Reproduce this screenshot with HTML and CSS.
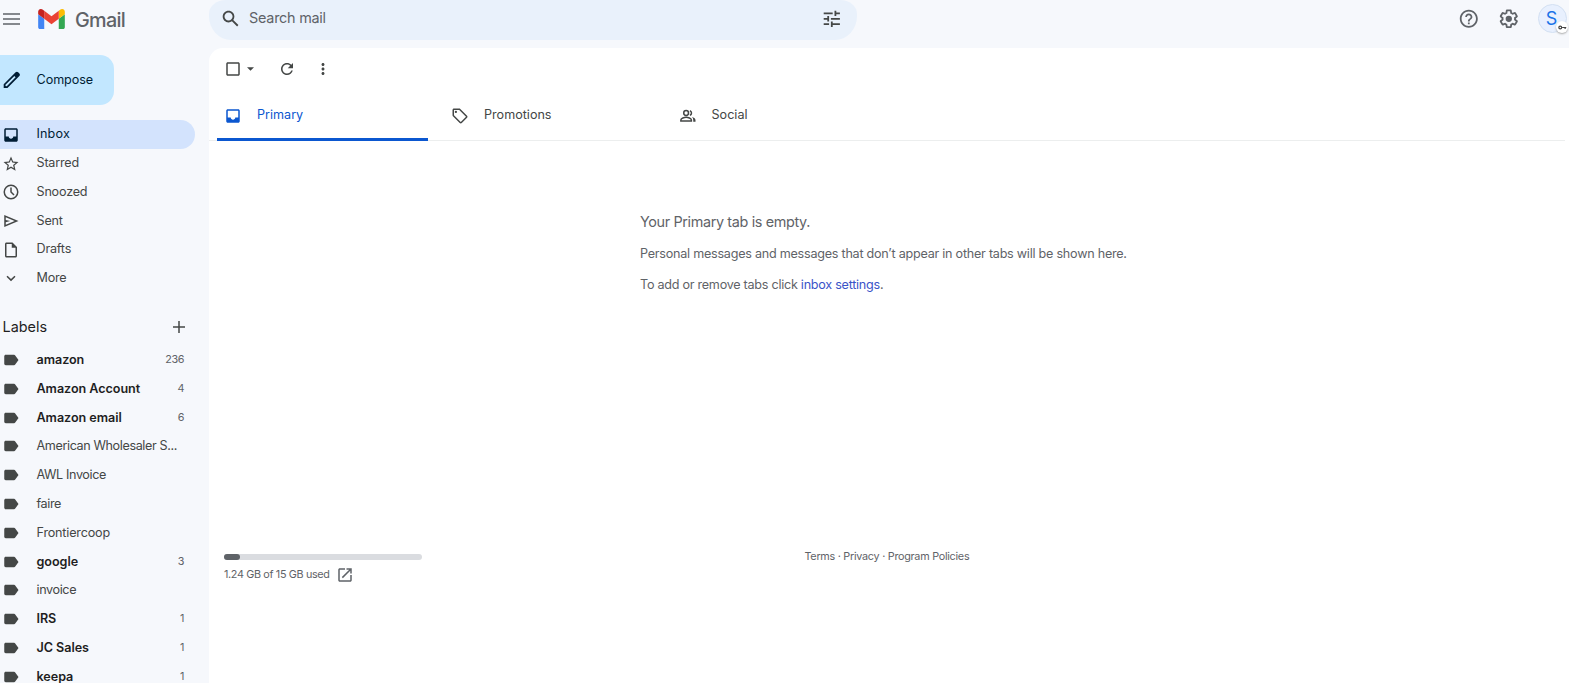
FILE: index.html
```
<!DOCTYPE html>
<html lang="en">
<head>
<meta charset="utf-8">
<title>Gmail</title>
<link rel="stylesheet" href="styles.css">
</head>
<body>
<svg class="defs" aria-hidden="true">
  <symbol id="label" viewBox="0 0 24 24"><path d="M17.630 5.840C17.270 5.330 16.670 5 16 5L5 5.010C3.900 5.010 3 5.900 3 7v10c0 1.100.900 1.990 2 1.990L16 19c.670 0 1.270-.330 1.630-.840L22 12l-4.370-6.160z"/></symbol>
  <symbol id="inbox" viewBox="0 0 24 24"><path d="M19 3H5c-1.100 0-2 .900-2 2v14c0 1.100.890 2 2 2h14c1.100 0 2-.900 2-2V5c0-1.100-.900-2-2-2zm0 11h-4c0 1.660-1.350 3-3 3s-3-1.340-3-3H5V5h14v9z"/></symbol>
</svg>
<header class="top">
  <div class="brand">
    <svg class="menu" viewBox="0 0 18 14"><path d="M0 2h17M0 7h17M0 12h17" stroke="#5f6368" stroke-width="1.7"/></svg>
    <svg class="logo" viewBox="52 42 88 66"><path fill="#4285f4" d="M58 108h14V74L52 59v43c0 3.320 2.690 6 6 6"/><path fill="#34a853" d="M120 108h14c3.320 0 6-2.690 6-6V59l-20 15"/><path fill="#fbbc04" d="M120 48v26l20-15v-8c0-7.420-8.470-11.650-14.400-7.200"/><path fill="#ea4335" d="M72 74V48l24 18 24-18v26L96 92"/><path fill="#c5221f" d="M52 51v8l20 15V48l-5.600-4.200c-5.940-4.450-14.400-.220-14.400 7.200"/></svg>
    <span class="wordmark">Gmail</span>
  </div>
  <div class="search">
    <svg class="i22" viewBox="0 0 24 24"><path d="M20.490 19l-5.730-5.730C15.530 12.200 16 10.910 16 9.500 16 5.910 13.090 3 9.500 3S3 5.910 3 9.500 5.910 16 9.500 16c1.410 0 2.700-.470 3.770-1.240L19 20.490 20.490 19zM5 9.500C5 7.010 7.010 5 9.500 5S14 7.010 14 9.500 11.990 14 9.500 14 5 11.990 5 9.500z"/></svg>
    <span class="search-text">Search mail</span>
    <svg class="i22 tune" viewBox="0 0 24 24"><path d="M3 17v2h6v-2H3zM3 5v2h10V5H3zm10 16v-2h8v-2h-8v-2h-2v6h2zM7 9v2H3v2h4v2h2V9H7zm14 4v-2H11v2h10zm-6-4h2V7h4V5h-4V3h-2v6z"/></svg>
  </div>
  <div class="tools">
    <svg class="i22" viewBox="0 0 24 24"><path d="M11 18h2v-2h-2v2zm1-16C6.480 2 2 6.480 2 12s4.480 10 10 10 10-4.480 10-10S17.520 2 12 2zm0 18c-4.410 0-8-3.590-8-8s3.590-8 8-8 8 3.590 8 8-3.590 8-8 8zm0-14c-2.210 0-4 1.790-4 4h2c0-1.100.900-2 2-2s2 .900 2 2c0 2-3 1.750-3 5h2c0-2.250 3-2.500 3-5 0-2.210-1.790-4-4-4z"/></svg>
    <svg class="i22" viewBox="0 0 24 24"><path d="M13.850 22.250h-3.700c-.740 0-1.360-.540-1.450-1.270l-.270-1.890c-.270-.140-.530-.290-.790-.460l-1.800.720c-.700.260-1.470-.030-1.810-.650L2.200 15.530c-.350-.660-.200-1.440.360-1.880l1.530-1.190c-.010-.150-.020-.300-.020-.460 0-.150.010-.310.020-.460l-1.520-1.190c-.590-.450-.740-1.260-.370-1.880l1.850-3.190c.340-.620 1.110-.900 1.790-.630l1.810.730c.260-.170.520-.320.780-.460l.270-1.910c.090-.700.710-1.250 1.440-1.250h3.700c.740 0 1.360.540 1.450 1.270l.270 1.890c.270.140.530.290.790.460l1.800-.720c.710-.260 1.480.030 1.820.650l1.840 3.180c.360.660.200 1.440-.360 1.880l-1.520 1.190c.010.150.020.300.020.460s-.010.310-.020.460l1.520 1.190c.560.450.720 1.230.370 1.860l-1.860 3.220c-.340.620-1.110.900-1.800.630l-1.800-.720c-.260.170-.520.320-.780.460l-.270 1.910c-.100.680-.720 1.220-1.460 1.220zm-3.230-2h2.760l.370-2.550.530-.220c.440-.180.880-.440 1.340-.780l.450-.340 2.380.960 1.380-2.400-2.030-1.580.070-.560c.030-.260.060-.510.060-.780s-.030-.530-.060-.780l-.070-.560 2.030-1.580-1.390-2.400-2.390.960-.450-.350c-.420-.320-.870-.580-1.330-.770l-.520-.220-.370-2.550h-2.760l-.370 2.550-.530.210c-.440.190-.880.440-1.340.790l-.450.330-2.380-.950-1.390 2.390 2.030 1.580-.070.560a7 7 0 0 0-.060.790c0 .260.020.530.060.780l.070.560-2.030 1.580 1.380 2.400 2.390-.960.450.350c.430.330.860.580 1.330.770l.530.220.380 2.550z"/><circle cx="12" cy="12" r="3.500"/></svg>
    <div class="avatar">S<span class="key"><svg viewBox="0 0 12 6"><path d="M5.500 3H11M9.500 3v2" fill="none" stroke="#444" stroke-width="1.600"/><circle cx="3" cy="3" r="1.900" fill="none" stroke="#444" stroke-width="1.600"/></svg></span></div>
  </div>
</header>
<div class="body">
  <nav class="side">
    <div class="compose"><svg class="i22" viewBox="0 0 24 24"><path d="M20.410 4.940l-1.350-1.350c-.780-.780-2.050-.780-2.830 0L3 16.820V21h4.180L20.410 7.770c.790-.780.790-2.050 0-2.830zm-14 14.120L5 19v-1.360l9.820-9.820 1.410 1.410-9.820 9.830z"/></svg><span>Compose</span></div>
    <div class="row active"><svg class="i18"><use href="#inbox"/></svg><span>Inbox</span></div>
    <div class="row nav"><svg class="i18" viewBox="0 0 24 24"><path d="M22 9.240l-7.190-.620L12 2 9.190 8.630 2 9.240l5.460 4.730L5.820 21 12 17.270 18.180 21l-1.630-7.030L22 9.240zM12 15.400l-3.760 2.270 1-4.280-3.320-2.880 4.380-.380L12 6.100l1.710 4.040 4.380.380-3.320 2.880 1 4.280L12 15.400z"/></svg><span>Starred</span></div>
    <div class="row nav"><svg class="i18" viewBox="0 0 24 24"><circle cx="12" cy="12" r="9" fill="none" stroke="#444746" stroke-width="2"/><path d="M12 6v6l4 4" fill="none" stroke="#444746" stroke-width="2"/></svg><span>Snoozed</span></div>
    <div class="row nav"><svg class="i18" viewBox="0 0 24 24"><path d="M3 4v16l19-8L3 4zm2 3l11.850 5L5 17v-3.500l6-1.500-6-1.500V7z"/></svg><span>Sent</span></div>
    <div class="row nav"><svg class="i18" viewBox="0 0 24 24"><path d="M14 2H6c-1.100 0-2 .900-2 2v16c0 1.100.900 2 2 2h12c1.100 0 2-.900 2-2V8l-6-6zM6 20V4h7v5h5v11H6z"/></svg><span>Drafts</span></div>
    <div class="row nav"><svg class="i18" viewBox="0 0 24 24"><path d="M7.400 7.500L12 12.100l4.600-4.600L18 8.900l-6 6-6-6z"/></svg><span>More</span></div>
    <div class="labels-head"><span>Labels</span><svg class="i18" viewBox="0 0 24 24"><path d="M20 13h-7v7h-2v-7H4v-2h7V4h2v7h7v2z"/></svg></div>
    <div class="row label bold"><svg class="i18"><use href="#label"/></svg><span>amazon</span><em>236</em></div>
    <div class="row label bold"><svg class="i18"><use href="#label"/></svg><span>Amazon Account</span><em>4</em></div>
    <div class="row label bold"><svg class="i18"><use href="#label"/></svg><span>Amazon email</span><em>6</em></div>
    <div class="row label"><svg class="i18"><use href="#label"/></svg><span>American Wholesaler S...</span></div>
    <div class="row label"><svg class="i18"><use href="#label"/></svg><span>AWL Invoice</span></div>
    <div class="row label"><svg class="i18"><use href="#label"/></svg><span>faire</span></div>
    <div class="row label"><svg class="i18"><use href="#label"/></svg><span class="wide">Frontiercoop</span></div>
    <div class="row label bold"><svg class="i18"><use href="#label"/></svg><span>google</span><em>3</em></div>
    <div class="row label"><svg class="i18"><use href="#label"/></svg><span>invoice</span></div>
    <div class="row label bold"><svg class="i18"><use href="#label"/></svg><span>IRS</span><em>1</em></div>
    <div class="row label bold"><svg class="i18"><use href="#label"/></svg><span>JC Sales</span><em>1</em></div>
    <div class="row label bold"><svg class="i18"><use href="#label"/></svg><span>keepa</span><em>1</em></div>
  </nav>
  <main class="panel">
    <div class="toolbar">
      <svg class="i18" viewBox="0 0 24 24"><path d="M19 5v14H5V5h14m0-2H5c-1.100 0-2 .900-2 2v14c0 1.100.900 2 2 2h14c1.100 0 2-.900 2-2V5c0-1.100-.900-2-2-2z"/></svg>
      <svg class="caret" viewBox="0 0 8 4"><path d="M0 0h8L4 4z"/></svg>
      <svg class="refresh i18" viewBox="0 0 24 24"><path d="M17.650 6.350C16.200 4.900 14.210 4 12 4c-4.420 0-7.990 3.580-7.990 8s3.570 8 7.990 8c3.730 0 6.840-2.550 7.730-6h-2.080c-.820 2.330-3.040 4-5.650 4-3.310 0-6-2.690-6-6s2.690-6 6-6c1.660 0 3.140.690 4.220 1.780L13 11h7V4l-2.350 2.350z"/></svg>
      <svg class="dots i18" viewBox="0 0 24 24"><path d="M12 8c1.100 0 2-.900 2-2s-.900-2-2-2-2 .900-2 2 .900 2 2 2zm0 2c-1.100 0-2 .900-2 2s.900 2 2 2 2-.900 2-2-.900-2-2-2zm0 6c-1.100 0-2 .900-2 2s.900 2 2 2 2-.900 2-2-.900-2-2-2z"/></svg>
    </div>
    <div class="tabs">
      <div class="tab on"><svg class="i18"><use href="#inbox"/></svg><span>Primary</span></div>
      <div class="tab"><svg class="i18" viewBox="0 0 24 24"><path d="M21.410 11.580l-9-9C12.050 2.220 11.550 2 11 2H4c-1.100 0-2 .900-2 2v7c0 .550.220 1.050.590 1.420l9 9c.360.360.860.580 1.410.580s1.050-.220 1.410-.590l7-7c.370-.360.590-.860.590-1.410s-.230-1.060-.590-1.420zM13 20.010L4 11V4h7v-.010l9 9-7 7.020z"/><circle cx="6.500" cy="6.500" r="1.500"/></svg><span>Promotions</span></div>
      <div class="tab"><svg class="i18" viewBox="0 0 24 24"><g fill="none" stroke="#444746" stroke-width="2"><circle cx="9.500" cy="8" r="3.200"/><path d="M2.500 18.500v-1.300c0-2 4.600-3.400 7-3.400s7 1.400 7 3.400v1.300zM14.500 4.900a3.300 3.300 0 0 1 0 6.200"/></g><path d="M17.300 13.300c2.300.5 4.700 1.900 4.700 3.900v2.300h-3v-2.300c0-1.600-.6-2.900-1.700-3.900z"/></svg><span>Social</span></div>
    </div>
    <div class="empty">
      <p class="lead">Your Primary tab is empty.</p>
      <p class="info">Personal messages and messages that don’t appear in other tabs will be shown here.</p>
      <p class="hint">To add or remove tabs click <a>inbox settings</a>.</p>
    </div>
    <footer class="foot">
      <div class="storage">
        <div class="bar"><div class="used"></div></div>
        <div class="quota"><span>1.24 GB of 15 GB used</span><svg class="i18" viewBox="0 0 24 24"><path d="M19 19H5V5h7V3H5c-1.110 0-2 .900-2 2v14c0 1.100.890 2 2 2h14c1.100 0 2-.900 2-2v-7h-2v7zM14 3v2h3.590l-9.830 9.830 1.410 1.410L19 6.410V10h2V3h-7z"/></svg></div>
      </div>
      <div class="legal">Terms · Privacy · Program Policies</div>
    </footer>
  </main>
</div>
</body>
</html>
```
FILE: styles.css
```
* { box-sizing: border-box; }
body { margin: 0; width: 1569px; height: 683px; overflow: hidden; background: #f6f8fc; color: #444746; font: 12.6px/18px Inter, "Liberation Sans", sans-serif; }
svg { display: block; flex: none; fill: #444746; }
span { white-space: nowrap; }
p { margin: 0; }
.defs { position: absolute; width: 0; height: 0; }
.i18 { width: 18px; height: 18px; }
.i22 { width: 21.6px; height: 21.6px; }
.top { display: flex; height: 48px; }
.brand { width: 209px; display: flex; align-items: flex-start; padding-left: 3px; }
.menu { width: 18px; height: 14px; margin-top: 12px; }
.logo { width: 27px; height: 20px; margin: 9px 0 0 17px; }
.wordmark { margin: 7px 0 0 10px; font: 500 19.8px/26px Inter, sans-serif; letter-spacing: -.7px; color: #5f6368; }
.search { width: 648px; height: 40px; padding: 0 14px 3px 11px; display: flex; align-items: center; background: #e9f1fb; border-radius: 17px 17px 22px 22px / 14px 14px 24px 24px; }
.search-text { flex: 1; margin: -1px 0 0 7.500px; font-size: 14.4px; letter-spacing: -.25px; color: #5f6368; }
.tools { margin-left: auto; display: flex; align-items: flex-start; padding-right: 2px; }
.tools > svg { margin: 8px 18.400px 0 0; fill: #5f6368; }
.avatar { position: relative; width: 29px; height: 29px; margin-top: 4px; border: 1px solid #d3e0f2; border-radius: 50%; background: #e8f0fe; color: #1a73e8; font-size: 18px; line-height: 27px; text-align: center; padding-right: 2px; }
.key { position: absolute; right: -2px; bottom: -1px; width: 12px; height: 12px; border-radius: 50%; background: #fff; box-shadow: 0 1px 2px #aaa; }
.key svg { width: 9px; height: 5px; margin: 4px 0 0 2px; }
.body { display: flex; height: 635px; }
.side { width: 209px; padding-top: 7px; }
.compose { width: 114px; height: 50px; margin-bottom: 15px; display: flex; align-items: center; gap: 14px; border-radius: 0 14px 14px 0; background: #c2e7ff; color: #001d35; letter-spacing: -.1px; }
.compose svg { margin-left: 1px; fill: #001d35; }
.row { width: 195px; height: 28.8px; padding: 0 11px 1px 2px; display: flex; align-items: center; }
.row span { margin-left: 16.500px; }
.row svg { margin-top: 2px; }
.row em { margin-left: auto; font-style: normal; font-size: 10.8px; letter-spacing: -.4px; color: #5f6368; }
.active { background: #d3e3fd; border-radius: 0 15px 15px 0; color: #001d35; }
.active span { letter-spacing: .15px; }
.active svg { fill: #001d35; }
.nav { padding-bottom: .2px; letter-spacing: -.2px; }
.nav svg { margin-top: 1px; }
.label { padding-bottom: 0; letter-spacing: -.38px; }
.label svg { margin-top: 0; }
.label .wide { letter-spacing: -.18px; }
.bold span { font-weight: 600; letter-spacing: -.05px; color: #1f1f1f; }
.labels-head { width: 195px; height: 52.800px; display: flex; align-items: center; justify-content: space-between; padding: 16px 7px .8px 2.500px; font-size: 14.4px; color: #1f1f1f; }
.panel { flex: 1; display: flex; flex-direction: column; background: #fff; border-radius: 14px 0 0 0; }
.toolbar { display: flex; align-items: center; height: 43px; padding: 0 0 1px 15px; }
.caret { width: 7px; height: 4px; margin-left: 5px; }
.refresh { margin-left: 24px; }
.dots { margin-left: 18px; }
.tabs { display: flex; height: 50px; margin-right: 4px; padding-left: 8px; border-bottom: 1px solid #eceeee; }
.tab { width: 227.500px; height: 50px; padding: 0 0 2px 7px; display: flex; align-items: center; gap: 15px; color: #444746; }
.tab svg { margin-top: 2px; }
.on { width: 211px; margin-right: 16px; border-bottom: 3px solid #0b57d0; border-radius: 3px 3px 0 0; padding-bottom: 0; color: #0b57d0; }
.on svg { fill: #0b57d0; }
.empty { height: 408px; padding: 72px 0 0 431px; color: #5f6368; }
.lead { font-size: 14.400px; letter-spacing: -.36px; margin-bottom: 14px; }
.info { letter-spacing: -.245px; margin-bottom: 13px; }
.hint { letter-spacing: -.26px; }
.empty a { color: #3b54c8; }
.foot { display: flex; padding-left: 15px; font-size: 10.800px; color: #5f6368; }
.storage { width: 198px; padding-top: 5px; }
.bar { height: 6px; border-radius: 3px; background: #dadce0; }
.used { width: 16px; height: 6px; border-radius: 3px; background: #5f6368; }
.quota { display: flex; align-items: center; gap: 6.500px; margin-top: 5.500px; letter-spacing: -.34px; }
.quota svg { fill: #5f6368; }
.legal { margin: -1px 0 0 382.500px; letter-spacing: -.265px; }
```
